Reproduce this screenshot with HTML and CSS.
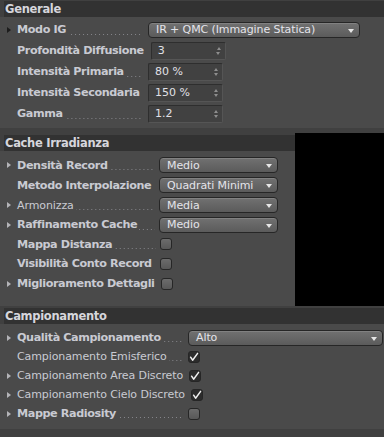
FILE: index.html
```html
<!DOCTYPE html>
<html>
<head>
<meta charset="utf-8">
<link rel="stylesheet" href="styles.css">
</head>
<body>
<div class="page">
  <section class="sec sec1">
    <div class="hdr">Generale</div>
    <div class="body">
      <div class="row"><span class="tri dark"></span><span class="lbl b">Modo IG</span><span class="dots"></span>
        <div class="dd w-modo"><span>IR + QMC (Immagine Statica)</span><i class="arr"></i></div></div>
      <div class="row"><span class="tri none"></span><span class="lbl b">Profondità Diffusione</span><span class="dots"></span>
        <div class="num"><span>3</span><i class="spin"></i></div></div>
      <div class="row"><span class="tri none"></span><span class="lbl b">Intensità Primaria</span><span class="dots"></span>
        <div class="num"><span>80 %</span><i class="spin"></i></div></div>
      <div class="row"><span class="tri none"></span><span class="lbl b">Intensità Secondaria</span><span class="dots"></span>
        <div class="num"><span>150 %</span><i class="spin"></i></div></div>
      <div class="row"><span class="tri none"></span><span class="lbl b">Gamma</span><span class="dots"></span>
        <div class="num"><span>1.2</span><i class="spin"></i></div></div>
    </div>
  </section>

  <section class="sec2wrap">
    <div class="sec sec2">
      <div class="hdr">Cache Irradianza</div>
      <div class="body">
        <div class="row"><span class="tri"></span><span class="lbl b">Densità Record</span><span class="dots"></span>
          <div class="dd w-s2"><span>Medio</span><i class="arr"></i></div></div>
        <div class="row"><span class="tri none"></span><span class="lbl b">Metodo Interpolazione</span><span class="dots"></span>
          <div class="dd w-s2"><span>Quadrati Minimi</span><i class="arr"></i></div></div>
        <div class="row"><span class="tri"></span><span class="lbl">Armonizza</span><span class="dots"></span>
          <div class="dd w-s2"><span>Media</span><i class="arr"></i></div></div>
        <div class="row"><span class="tri"></span><span class="lbl b">Raffinamento Cache</span><span class="dots"></span>
          <div class="dd w-s2"><span>Medio</span><i class="arr"></i></div></div>
        <div class="row"><span class="tri none"></span><span class="lbl b">Mappa Distanza</span><span class="dots"></span>
          <div class="cb"></div></div>
        <div class="row"><span class="tri none"></span><span class="lbl b">Visibilità Conto Record</span><span class="dots"></span>
          <div class="cb"></div></div>
        <div class="row"><span class="tri"></span><span class="lbl b">Miglioramento Dettagli</span><span class="dots"></span>
          <div class="cb"></div></div>
      </div>
    </div>
    <div class="preview"></div>
  </section>

  <section class="sec sec3">
    <div class="hdr">Campionamento</div>
    <div class="body">
      <div class="row"><span class="tri"></span><span class="lbl b">Qualità Campionamento</span><span class="dots"></span>
        <div class="dd w-s3"><span>Alto</span><i class="arr"></i></div></div>
      <div class="row"><span class="tri none"></span><span class="lbl">Campionamento Emisferico</span><span class="dots"></span>
        <div class="cb on"><svg viewBox="0 0 12 12" width="12" height="12"><path d="M2.6 6.2 L4.6 9.2 L9.6 2.4" fill="none" stroke="#f0f0f0" stroke-width="1.5" stroke-linecap="round" stroke-linejoin="round"/></svg></div></div>
      <div class="row"><span class="tri"></span><span class="lbl">Campionamento Area Discreto</span><span class="dots"></span>
        <div class="cb on"><svg viewBox="0 0 12 12" width="12" height="12"><path d="M2.6 6.2 L4.6 9.2 L9.6 2.4" fill="none" stroke="#f0f0f0" stroke-width="1.5" stroke-linecap="round" stroke-linejoin="round"/></svg></div></div>
      <div class="row"><span class="tri"></span><span class="lbl">Campionamento Cielo Discreto</span><span class="dots"></span>
        <div class="cb on"><svg viewBox="0 0 12 12" width="12" height="12"><path d="M2.6 6.2 L4.6 9.2 L9.6 2.4" fill="none" stroke="#f0f0f0" stroke-width="1.5" stroke-linecap="round" stroke-linejoin="round"/></svg></div></div>
      <div class="row"><span class="tri"></span><span class="lbl b">Mappe Radiosity</span><span class="dots"></span>
        <div class="cb"></div></div>
    </div>
  </section>
</div>
</body>
</html>
```

FILE: styles.css
```css
html, body {
  margin: 0;
  padding: 0;
  background: #404040;
  width: 384px;
  height: 437px;
  overflow: hidden;
  font-family: "DejaVu Sans", "Noto Sans", sans-serif;
  font-size: 11px;
  color: #c9cad2;
}
.page {
  display: flex;
  flex-direction: column;
  padding-top: 1px;
}
.sec { display: flex; flex-direction: column; }
.hdr {
  margin-left: 4px;
  height: 16px;
  line-height: 16px;
  background: #323232;
  color: #d6d6dc;
  font-weight: bold;
  font-size: 11.5px;
  padding-left: 1px;
  letter-spacing: -0.3px;
}
.body { background: #4a4a4a; }
.sec1 .body { padding: 2px 0 4px; }
.sec1 .row { height: 21px; }
.sec1 .dots { margin-right: 5px; }

.sec2wrap {
  display: flex;
  margin-top: 5px;
  height: 173px;
}
.sec2 { width: 295px; padding-top: 2px; }
.sec2 .body { flex: 1; padding-top: 4px; }
.sec2 .row { height: 20px; }
.sec2 .row:nth-child(n+4) { height: 19.6px; }
.sec2 .dots { margin-right: 4px; }
.preview { flex: 1; background: #000; }

.sec3 { margin-top: 2px; }
.sec3 .body { padding: 4px 0 6px; }
.sec3 .row { height: 19px; }
.sec3 .dots { margin-right: 4px; }

.row {
  display: flex;
  align-items: center;
  padding-right: 0;
}
.tri {
  width: 0; height: 0;
  margin-left: 7px;
  margin-right: 6px;
  border-top: 3.5px solid transparent;
  border-bottom: 3.5px solid transparent;
  border-left: 4px solid #b4b4b8;
  flex: none;
}
.tri.dark { border-left-color: #1c1c1c; }
.tri.none { border-left-color: transparent; }
.lbl {
  white-space: nowrap;
  flex: none;
  letter-spacing: -0.1px;
}
.lbl.b { font-weight: bold; font-size: 11.2px; letter-spacing: -0.4px; }
.dots {
  flex: 1;
  align-self: stretch;
  min-width: 0;
  margin-left: 2px;
  background-image: linear-gradient(to right, #85858a 1px, transparent 1px);
  background-size: 4px 1px;
  background-repeat: repeat-x;
  background-position: right 0 bottom 5px;
}
.dd {
  flex: none;
  height: 16px;
  box-sizing: border-box;
  border: 1px solid #262626;
  border-radius: 4px;
  background: linear-gradient(#717171, #5b5b5b);
  box-shadow: inset 0 1px 0 rgba(255,255,255,0.12);
  display: flex;
  align-items: center;
  padding-left: 7px;
  position: relative;
  color: #e4e4ea;
  font-size: 11px;
  letter-spacing: -0.1px;
}
.w-modo { width: 212px; margin-right: 24px; }
.w-s2 { width: 119px; margin-right: 17px; }
.w-s3 { width: 195px; margin-right: 1px; }
.arr {
  position: absolute;
  right: 5px;
  top: 6px;
  width: 0; height: 0;
  border-left: 3.5px solid transparent;
  border-right: 3.5px solid transparent;
  border-top: 4px solid #e6e6e6;
}
.num {
  flex: none;
  width: 75px;
  height: 18px;
  margin-right: 161px;
  box-sizing: border-box;
  border: 1px solid #2e2e2e;
  border-bottom-color: #555;
  border-right-color: #555;
  background: #414141;
  border-radius: 2px;
  display: flex;
  align-items: center;
  padding-left: 6px;
  color: #e0e0e6;
  position: relative;
}
.spin {
  position: absolute;
  right: 4px;
  top: 4px;
  width: 0; height: 0;
  border-left: 2.5px solid transparent;
  border-right: 2.5px solid transparent;
  border-bottom: 3px solid #8e8e8e;
}
.spin::after {
  content: "";
  position: absolute;
  left: -2.5px;
  top: 5px;
  border-left: 2.5px solid transparent;
  border-right: 2.5px solid transparent;
  border-top: 3px solid #8e8e8e;
}
.cb {
  flex: none;
  width: 12px;
  height: 12px;
  box-sizing: border-box;
  border: 1px solid #262626;
  border-radius: 3px;
  background: linear-gradient(#6c6c6c, #585858);
  position: relative;
  overflow: hidden;
}
.cb svg {
  position: absolute;
  left: -1px;
  top: -1px;
  display: block;
}
.sec2 .cb { margin-right: 123px; }
.sec3 .cb { margin-right: 184px; }
.cb.on { background: #2c2c2c; }
```
